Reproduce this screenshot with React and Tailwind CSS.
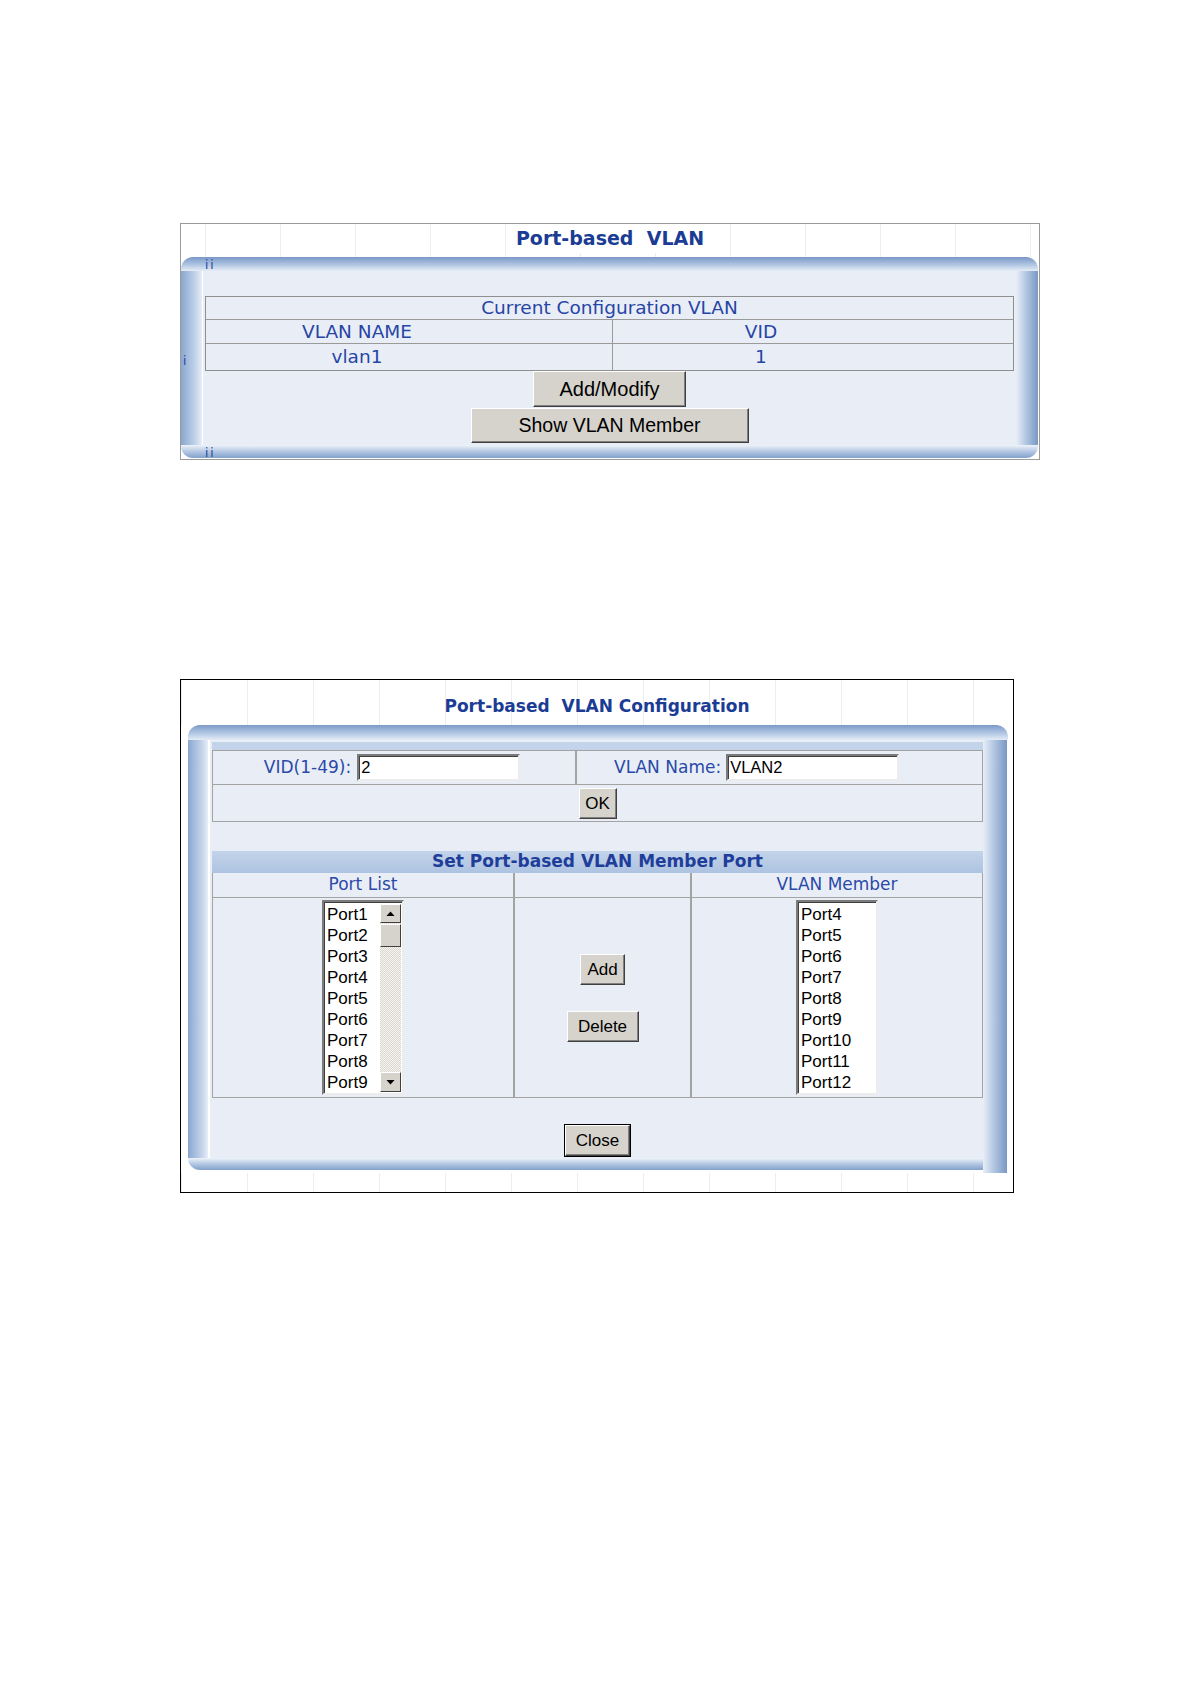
import React from 'react';

const verdana = "font-['DejaVu_Sans',Verdana,sans-serif]";
const arial = "font-['Liberation_Sans',Arial,sans-serif]";

function Btn({ children, className = '' }) {
  return (
    <button
      className={`flex items-center justify-center bg-[#d6d3cc] border border-t-white border-l-white border-b-[#404040] border-r-[#404040] shadow-[inset_-1px_-1px_0_#808080] text-black leading-none ${arial} ${className}`}
    >
      {children}
    </button>
  );
}

function TextBox({ value, className = '' }) {
  return (
    <div
      className={`flex items-center bg-white border-2 border-t-[#7b7b7b] border-l-[#7b7b7b] border-b-[#ececec] border-r-[#ececec] shadow-[inset_1px_1px_0_#404040] pl-[2px] text-[16.5px] text-black ${arial} ${className}`}
    >
      {value}
    </div>
  );
}

function Arrow({ up }) {
  return (
    <svg width="9" height="6" viewBox="0 0 9 6">
      <polygon points={up ? '4.5,0.5 8.5,5 0.5,5' : '0.5,1 8.5,1 4.5,5.5'} fill="#000" />
    </svg>
  );
}

function ListBox({ items, scroll }) {
  return (
    <div className="flex w-[82px] h-[195px] bg-white border-2 border-t-[#7b7b7b] border-l-[#7b7b7b] border-b-[#ececec] border-r-[#ececec] shadow-[inset_1px_1px_0_#404040]">
      <div className={`flex-1 flex flex-col pt-[2px] pl-[3px] text-[17px] leading-[21px] text-black ${arial}`}>
        {items.map((p) => (
          <div key={p}>{p}</div>
        ))}
      </div>
      {scroll && (
        <div className="flex flex-col w-[21px] mt-[2px] mb-[1px] mr-[1px] bg-[repeating-conic-gradient(#d9d6cf_0_25%,#f6f5f2_0_50%)] bg-[length:2px_2px]">
          <div className="flex items-center justify-center h-[19px] bg-[#d6d3cc] border border-t-white border-l-white border-b-[#404040] border-r-[#404040]">
            <Arrow up />
          </div>
          <div className="h-[23px] mt-[1px] bg-[#d6d3cc] border border-t-white border-l-white border-b-[#404040] border-r-[#404040]" />
          <div className="flex-1" />
          <div className="flex items-center justify-center h-[20px] bg-[#d6d3cc] border border-t-white border-l-white border-b-[#404040] border-r-[#404040]">
            <Arrow />
          </div>
        </div>
      )}
    </div>
  );
}

function Marks({ children, className = '' }) {
  return <span className={`block text-[12px] leading-[10px] tracking-[2px] text-[#23449c] ${verdana} ${className}`}>{children}</span>;
}

function CurrentVlanPanel() {
  return (
    <div className="w-[860px] h-[237px] border border-[#9b9b9b] flex flex-col bg-white">
      {/* title row */}
      <div className="h-[33px] flex items-center justify-center pb-[4px] bg-[linear-gradient(90deg,#ededed_1px,transparent_1px)] bg-[length:75px_100%] bg-[position:24px_0]">
        <span className={`bg-white px-2 text-[19px] font-bold text-[#1b3c94] ${verdana}`}>Port-based&nbsp;&nbsp;VLAN</span>
      </div>

      {/* top bar */}
      <div className="h-[14px] mr-[1px] rounded-tl-[12px] rounded-tr-[12px] bg-[linear-gradient(180deg,#7998c6,#b0c5e2_55%,#e6edf6)] pl-[24px] pt-[3px]">
        <Marks>ii</Marks>
      </div>

      <div className="flex h-[174px]">
        <div className="w-[22px] flex items-center pl-[2px] pt-[6px] bg-[linear-gradient(90deg,#8aa7d0,#c4d4ea_70%,#e8eef7)] border-r border-white">
          <Marks>i</Marks>
        </div>
        <div className="flex-1 flex flex-col bg-[#e9eef6] pt-[25px] pl-[2px] pr-[2px]">
          <div className={`flex flex-col border border-[#8f8f8f] text-[18.5px] text-[#2745a5] ${verdana}`}>
            <div className="h-[23px] flex items-center justify-center border-b border-[#9a9a9a]">
              Current Configuration VLAN
            </div>
            <div className="h-[24px] flex border-b border-[#9a9a9a]">
              <div className="w-[407px] flex items-center justify-center pr-[104px] border-r border-[#9a9a9a]">VLAN NAME</div>
              <div className="flex-1 flex items-center justify-center pr-[104px]">VID</div>
            </div>
            <div className="h-[26px] flex">
              <div className="w-[407px] flex items-center justify-center pr-[104px] border-r border-[#9a9a9a]">vlan1</div>
              <div className="flex-1 flex items-center justify-center pr-[104px]">1</div>
            </div>
          </div>
          <div className="flex flex-col items-center">
            <Btn className="w-[153px] h-[36px] text-[20px]">Add/Modify</Btn>
            <Btn className="w-[278px] h-[35px] mt-[1px] text-[19.5px]">Show VLAN Member</Btn>
          </div>
        </div>
        <div className="w-[22px] bg-[linear-gradient(90deg,#e8eef7,#b8cbe5_40%,#7998c4)]" />
        <div className="w-[1px]" />
      </div>

      {/* bottom bar */}
      <div className="h-[13px] mr-[1px] rounded-bl-[12px] rounded-br-[12px] bg-[linear-gradient(180deg,#eef3f9,#b3c7e3_50%,#83a1cb)] pl-[24px] pt-[3px]">
        <Marks>ii</Marks>
      </div>
    </div>
  );
}

function ConfigPanel() {
  const left = ['Port1', 'Port2', 'Port3', 'Port4', 'Port5', 'Port6', 'Port7', 'Port8', 'Port9'];
  const right = ['Port4', 'Port5', 'Port6', 'Port7', 'Port8', 'Port9', 'Port10', 'Port11', 'Port12'];
  const label = `text-[17px] text-[#2a49a8] ${verdana}`;

  return (
    <div className="w-[834px] h-[514px] border border-black flex flex-col bg-white">
      {/* title row */}
      <div className="h-[45px] flex items-end justify-center pb-[6px] bg-[linear-gradient(90deg,#ededed_1px,transparent_1px)] bg-[length:66px_100%] bg-[position:66px_0]">
        <span className={`text-[17px] font-bold text-[#1b3c94] ${verdana}`}>Port-based&nbsp;&nbsp;VLAN Configuration</span>
      </div>

      {/* framed body */}
      <div className="flex flex-col ml-[7px] mr-[5px]">
        <div className="h-[15px] rounded-tl-[12px] rounded-tr-[12px] bg-[linear-gradient(180deg,#7b9ac8,#b2c7e3_55%,#e5ecf6)]" />
        <div className="flex">
          <div className="w-[795px] flex flex-col">
            <div className="flex h-[418px]">
              <div className="w-[22px] bg-[linear-gradient(90deg,#8aa7d0,#c4d4ea_70%,#e8eef7)] border-r-2 border-white" />
              <div className="flex-1 flex flex-col bg-[#e9eef6] pt-[2px] pl-[2px]">
                <div className="h-[8px] bg-[#c2d3ea]" />

                {/* VID / name row */}
                <div className="h-[35px] flex border border-[#a3a3a3]">
                  <div className="w-[364px] flex items-center justify-center gap-[6px] pr-[4px] border-r-2 border-[#a3a3a3]">
                    <span className={label}>VID(1-49):</span>
                    <TextBox value="2" className="w-[163px] h-[27px]" />
                  </div>
                  <div className="flex-1 flex items-center pl-[37px] gap-[5px]">
                    <span className={label}>VLAN Name:</span>
                    <TextBox value="VLAN2" className="w-[173px] h-[27px]" />
                  </div>
                </div>
                <div className="h-[37px] flex items-center justify-center border border-t-0 border-[#a3a3a3]">
                  <Btn className="w-[38px] h-[31px] text-[17px]">OK</Btn>
                </div>

                <div className="h-[29px]" />

                {/* member ports */}
                <div className={`h-[22px] flex items-center justify-center bg-[linear-gradient(180deg,#c3d4ea,#adc3e1)] text-[17px] font-bold text-[#1f3e9a] ${verdana}`}>
                  Set Port-based VLAN Member Port
                </div>
                <div className="h-[25px] flex border border-t-0 border-[#a3a3a3]">
                  <div className={`w-[302px] flex items-center justify-center border-r-2 border-[#a3a3a3] ${label}`}>Port List</div>
                  <div className="w-[177px] border-r-2 border-[#a3a3a3]" />
                  <div className={`flex-1 flex items-center justify-center ${label}`}>VLAN Member</div>
                </div>
                <div className="h-[200px] flex border border-t-0 border-[#a3a3a3]">
                  <div className="w-[302px] flex items-center justify-center border-r-2 border-[#a3a3a3]">
                    <ListBox items={left} scroll />
                  </div>
                  <div className="w-[177px] flex flex-col items-center justify-center gap-[26px] border-r-2 border-[#a3a3a3]">
                    <Btn className="w-[45px] h-[31px] text-[17px]">Add</Btn>
                    <Btn className="w-[72px] h-[31px] text-[17px]">Delete</Btn>
                  </div>
                  <div className="flex-1 flex items-center justify-center">
                    <ListBox items={right} />
                  </div>
                </div>

                <div className="flex justify-center pt-[27px]">
                  <Btn className="w-[65px] h-[31px] text-[17px] outline outline-1 outline-black">Close</Btn>
                </div>
              </div>
            </div>
            <div className="h-[12px] rounded-bl-[12px] bg-[linear-gradient(180deg,#eef3f9,#b3c7e3_50%,#83a1cb)]" />
          </div>
          <div className="w-[24px] h-[433px] bg-[linear-gradient(90deg,#e8eef7,#b8cbe5_40%,#7998c4)]" />
        </div>
      </div>

      {/* footer strip */}
      <div className="flex-1 bg-[linear-gradient(90deg,#ededed_1px,transparent_1px)] bg-[length:66px_100%] bg-[position:66px_0]" />
    </div>
  );
}

export default function App() {
  return (
    <div className="min-h-[1684px] w-[1190px] bg-white pt-[223px] pl-[180px]">
      <CurrentVlanPanel />
      <div className="mt-[219px]">
        <ConfigPanel />
      </div>
    </div>
  );
}
